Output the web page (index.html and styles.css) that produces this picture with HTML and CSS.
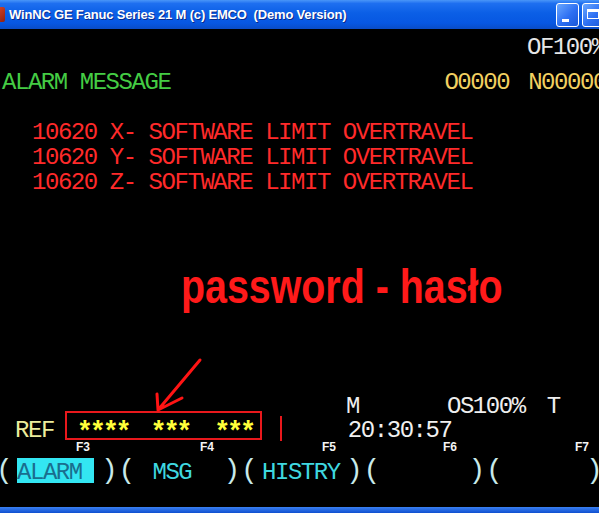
FILE: index.html
```html
<!DOCTYPE html>
<html lang="pl">
<head>
    <meta charset="UTF-8">
    <title>WinNC GE Fanuc Series 21 M</title>
    <link rel="stylesheet" href="styles.css">
</head>
<body>
    <header class="titlebar">
        <span class="app-icon"></span>
        <span class="title">WinNC GE Fanuc Series 21 M (c) EMCO  (Demo Version)</span>
        <div class="win-buttons">
            <span class="win-btn min"><i></i></span>
            <span class="win-btn max"><i></i></span>
        </div>
    </header>

    <main class="screen">
        <div class="row status-top"><span class="white">OF100%</span></div>
        <div class="row alarm-head">
            <span class="green">ALARM MESSAGE</span>
            <span class="prog">O0000</span>
            <span class="seq">N00000</span>
        </div>

        <div class="alarms">
            <div class="alarm">10620 X- SOFTWARE LIMIT OVERTRAVEL</div>
            <div class="alarm">10620 Y- SOFTWARE LIMIT OVERTRAVEL</div>
            <div class="alarm">10620 Z- SOFTWARE LIMIT OVERTRAVEL</div>
        </div>

        <div class="note">password - hasło</div>

        <div class="row mode-row">
            <span class="mode">M</span>
            <span class="os">OS100%</span>
            <span class="tool">T</span>
        </div>
        <div class="row ref-row">
            <span class="ref">REF</span>
            <div class="pass-box">
                <span class="stars">****</span>
                <span class="stars gap1">***</span>
                <span class="stars gap2">***</span>
            </div>
            <span class="cursor"></span>
            <span class="clock">20:30:57</span>
        </div>

        <div class="fkeys">
            <span>F3</span>
            <span>F4</span>
            <span>F5</span>
            <span>F6</span>
            <span>F7</span>
        </div>

        <div class="softkeys">
            <div class="key"><span class="paren">(</span><span class="label active">ALARM </span><span class="paren close">)</span></div>
            <div class="key"><span class="paren">(</span><span class="label"> MSG  </span><span class="paren close">)</span></div>
            <div class="key"><span class="paren">(</span><span class="label">HISTRY</span><span class="paren close">)</span></div>
            <div class="key"><span class="paren">(</span><span class="label">      </span><span class="paren close">)</span></div>
            <div class="key"><span class="paren">(</span><span class="label">      </span><span class="paren close">)</span></div>
        </div>
    </main>

    <div class="bottom-bar"></div>

    <svg class="arrow" width="599" height="513" viewBox="0 0 599 513">
        <path d="M200 360 L158 410 M158 410 L157 394 M158 410 L182 398" />
    </svg>
</body>
</html>
```

FILE: styles.css
```css
body {
    margin: 0;
    width: 599px;
    height: 513px;
    overflow: hidden;
    background: #000;
    position: relative;
}

.titlebar {
    height: 29px;
    display: flex;
    align-items: center;
    background: linear-gradient(#4a96f8 0%, #1e6ff0 12%, #0b5fe6 45%, #0757e2 80%, #0a4cc6 100%);
}

.app-icon {
    width: 16px;
    height: 15px;
    margin-left: -11px;
    margin-right: 4px;
    background: linear-gradient(135deg, #f05030, #902010);
    border-radius: 2px;
}

.title {
    color: #fff;
    font: bold 13px "Liberation Sans", Arial, sans-serif;
    letter-spacing: -0.18px;
    text-shadow: 1px 1px 0 #0b2a8a;
    white-space: pre;
}

.win-buttons {
    margin-left: auto;
    margin-right: -6px;
    display: flex;
    gap: 3px;
}

.win-btn {
    width: 23px;
    height: 24px;
    box-sizing: border-box;
    border: 1px solid #fff;
    border-radius: 3px;
    background: linear-gradient(135deg, #6aa8ff, #2d6ff2 55%, #1a58d8);
    display: flex;
}

.win-btn.min i {
    width: 7px;
    height: 3px;
    background: #fff;
    margin: auto auto 4px 5px;
}

.win-btn.max i {
    width: 12px;
    height: 10px;
    box-sizing: border-box;
    border: 1px solid #fff;
    border-top-width: 3px;
    margin: 5px auto auto 4px;
}

.screen {
    height: 478px;
    overflow: hidden;
    font-family: "Liberation Mono", "Courier New", monospace;
    font-size: 24px;
    letter-spacing: -1.45px;
    line-height: 25px;
}

.row {
    display: flex;
    white-space: pre;
}

.status-top {
    padding-top: 6px;
    padding-left: 527px;
}

.white {
    color: #e6e6e6;
}

.alarm-head {
    margin-top: 10px;
    padding-left: 2px;
}

.green {
    color: #44cc44;
}

.prog,
.seq {
    color: #f2d060;
}

.prog {
    margin-left: 274px;
}

.seq {
    margin-left: 19px;
}

.alarms {
    margin-top: 25px;
    padding-left: 32px;
    color: #ff2a2a;
}

.alarm {
    white-space: pre;
}

.note {
    margin-top: 68px;
    padding-left: 181px;
    width: max-content;
    font: bold 48px "Liberation Sans", Arial, sans-serif;
    letter-spacing: 0;
    line-height: 48px;
    color: #ff1a1a;
    transform: scaleX(0.82);
    transform-origin: 181px 0;
}

.mode-row {
    margin-top: 91px;
    padding-left: 346px;
    line-height: 9px;
    color: #eeeeee;
}

.os {
    margin-left: 88px;
}

.tool {
    margin-left: 22px;
}

.ref-row {
    align-items: flex-start;
    padding-left: 15px;
}

.ref {
    margin-top: 10px;
    line-height: 20px;
    color: #ecec9c;
}

.pass-box {
    margin-left: 11px;
    width: 197px;
    height: 29px;
    box-sizing: border-box;
    border: 2px solid #e8181c;
    padding: 11px 0 0 10px;
    display: flex;
    font-size: 27px;
    letter-spacing: -3.3px;
    line-height: 18px;
    font-weight: bold;
    color: #ffff3a;
}

.gap1 {
    margin-left: 22px;
}

.gap2 {
    margin-left: 25px;
}

.cursor {
    margin: 5px 0 0 18px;
    width: 2px;
    height: 25px;
    background: #e8181c;
}

.clock {
    margin: 10px 0 0 66px;
    line-height: 20px;
    color: #f0f0f0;
}

.fkeys {
    display: grid;
    grid-template-columns: 124px 122px 121px 132px auto;
    padding-left: 76px;
    font: bold 12px "Liberation Sans", Arial, sans-serif;
    letter-spacing: 0;
    line-height: 12px;
    color: #f4f4f4;
}

.softkeys {
    margin-top: 5px;
    display: flex;
    width: 640px;
    white-space: pre;
}

.key {
    flex: 0 0 122.5px;
    display: flex;
    height: 25px;
}

.paren {
    width: 17px;
    margin-left: -4px;
    font-size: 28px;
    line-height: 25px;
    color: #c8eaea;
}

.paren.close {
    margin-left: 7px;
    width: auto;
}

.key:last-child .paren.close {
    margin-left: 2px;
}

.label {
    width: 77px;
    height: 25px;
    line-height: 29px;
    color: #3fd8e0;
    margin-left: 4px;
}

.label.active {
    background: #33e6f2;
    color: #1a6e8e;
}

.bottom-bar {
    height: 6px;
    background: linear-gradient(#3a80f2, #0f4fd0);
}

.arrow {
    position: absolute;
    top: 0;
    left: 0;
    pointer-events: none;
}

.arrow path {
    fill: none;
    stroke: #ff1414;
    stroke-width: 3;
    stroke-linecap: round;
}
```
